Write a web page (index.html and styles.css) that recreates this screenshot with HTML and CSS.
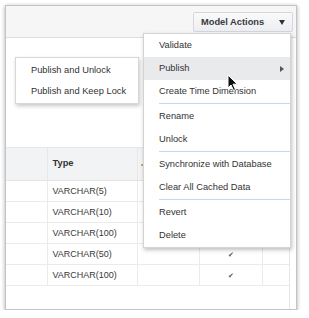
FILE: index.html
```html
<!DOCTYPE html>
<html lang="en">
<head>
    <meta charset="UTF-8">
    <meta name="viewport" content="width=device-width, initial-scale=1.0">
    <title>Model Actions</title>
    <link rel="stylesheet" href="styles.css">
</head>
<body>
    <div class="window">
        <div class="toolbar">
            <button class="model-actions">Model Actions <span class="caret"></span></button>
        </div>
        <div class="content">
            <div class="panel">
                <div class="spacer"></div>
                <table class="grid">
                    <thead>
                        <tr>
                            <th class="c1"></th>
                            <th class="c2">Type</th>
                            <th class="c3"><span class="sort"></span></th>
                            <th class="c4"></th>
                            <th class="c5"></th>
                        </tr>
                    </thead>
                    <tbody>
                        <tr><td></td><td>VARCHAR(5)</td><td></td><td class="check"></td><td></td></tr>
                        <tr><td></td><td>VARCHAR(10)</td><td></td><td class="check"></td><td></td></tr>
                        <tr><td></td><td>VARCHAR(100)</td><td></td><td class="check"></td><td></td></tr>
                        <tr><td></td><td>VARCHAR(50)</td><td></td><td class="check">&#10004;</td><td></td></tr>
                        <tr><td></td><td>VARCHAR(100)</td><td></td><td class="check">&#10004;</td><td></td></tr>
                    </tbody>
                </table>
            </div>
        </div>
    </div>

    <!-- dropdown menu -->
    <ul class="menu">
        <li>Validate</li>
        <li class="active">Publish <span class="arrow"></span></li>
        <li>Create Time Dimension</li>
        <li class="sep"></li>
        <li>Rename</li>
        <li>Unlock</li>
        <li class="sep"></li>
        <li>Synchronize with Database</li>
        <li>Clear All Cached Data</li>
        <li class="sep"></li>
        <li>Revert</li>
        <li>Delete</li>
    </ul>

    <ul class="submenu">
        <li>Publish and Unlock</li>
        <li>Publish and Keep Lock</li>
    </ul>

    <svg class="cursor" width="12" height="18" viewBox="0 0 12 18">
        <path d="M1 1 L1 14 L4 11 L6.5 16.5 L8.5 15.6 L6 10.2 L10.2 10.2 Z" fill="#111" stroke="#fff" stroke-width="1"/>
    </svg>
</body>
</html>
```

FILE: styles.css
```css
body {
    margin: 0;
    background-color: #fff;
    font-family: "Liberation Sans", Arial, sans-serif;
    color: #333;
}

.window {
    margin: 5px 0 0 5px;
    width: 292px;
    height: 305px;
    box-sizing: border-box;
    border: 1px solid #c4c4c4;
    box-shadow: 0 1px 4px rgba(0, 0, 0, 0.35);
    background-color: #fff;
    display: flex;
    flex-direction: column;
}

.toolbar {
    padding: 6px 3px 0 0;
    box-sizing: border-box;
    height: 32px;
    background-color: #f6f6f6;
    border-bottom: 1px solid #d5dde6;
    display: flex;
    justify-content: flex-end;
    align-items: flex-start;
}

.model-actions {
    width: 100px;
    height: 20px;
    padding: 0 7px;
    border: 1px solid #d3d7dc;
    border-radius: 2px;
    background: linear-gradient(#f9fafb, #eceef1);
    font-family: inherit;
    font-weight: bold;
    font-size: 9.3px;
    color: #3a3a3a;
    display: flex;
    justify-content: space-between;
    align-items: center;
}

.caret {
    width: 0;
    height: 0;
    border-left: 3.5px solid transparent;
    border-right: 3.5px solid transparent;
    border-top: 5px solid #333;
}

.content {
    flex: 1;
    display: flex;
}

.panel {
    width: 283px;
    border-right: 1px solid #e4e6e8;
}

.spacer {
    height: 109px;
}

.grid {
    border-collapse: collapse;
    width: 283px;
    table-layout: fixed;
    font-size: 9px;
    line-height: 1;
}

.grid th,
.grid td {
    box-sizing: border-box;
}

.grid th {
    height: 33px;
    background-color: #f2f3f5;
    border-top: 1px solid #e6e7e9;
    border-bottom: 1px solid #e3e4e6;
    border-left: 1px solid #e6e7e9;
    text-align: left;
    font-weight: bold;
    font-size: 9.3px;
    padding: 0 0 0 5px;
}

.grid th:first-child,
.grid td:first-child {
    border-left: none;
}

.grid .c1 { width: 41px; }
.grid .c2 { width: 90px; }
.grid .c3 { width: 62px; }
.grid .c4 { width: 63px; }

.grid td {
    height: 21px;
    padding: 0 0 0 5px;
    border-bottom: 1px solid #ebebeb;
    border-left: 1px solid #ebebeb;
    color: #3a3a3a;
}

.grid .check {
    text-align: center;
    padding: 0;
    font-size: 7px;
    color: #4a5a6e;
}

.sort {
    display: inline-block;
    width: 2px;
    height: 2px;
    margin-left: -2px;
    background-color: #d6a36a;
}

.menu {
    position: absolute;
    left: 143px;
    top: 33px;
    width: 148px;
    margin: 0;
    padding: 0;
    list-style: none;
    box-sizing: border-box;
    background-color: #fff;
    border: 1px solid #d4d4d4;
    box-shadow: 1px 2px 4px rgba(0, 0, 0, 0.25);
    font-size: 9.3px;
    color: #333;
}

.menu li {
    height: 23px;
    line-height: 23px;
    padding: 0 6px 0 15px;
    display: flex;
    justify-content: space-between;
    align-items: center;
}

.menu li.active {
    background-color: #e9eaec;
}

.menu li.sep {
    height: 1px;
    padding: 0;
    margin: 0 0 1px 15px;
    background-color: #c8d7e9;
}

.arrow {
    width: 0;
    height: 0;
    border-top: 3px solid transparent;
    border-bottom: 3px solid transparent;
    border-left: 4px solid #555;
}

.submenu {
    position: absolute;
    left: 15px;
    top: 57px;
    width: 124px;
    margin: 0;
    padding: 2px 0 1px;
    list-style: none;
    box-sizing: border-box;
    background-color: #fff;
    border: 1px solid #d8d8d8;
    box-shadow: 1px 2px 4px rgba(0, 0, 0, 0.22);
    font-size: 9.3px;
    color: #333;
}

.submenu li {
    height: 21px;
    line-height: 21px;
    padding-left: 15px;
}

.cursor {
    position: absolute;
    left: 227px;
    top: 74px;
}
```
